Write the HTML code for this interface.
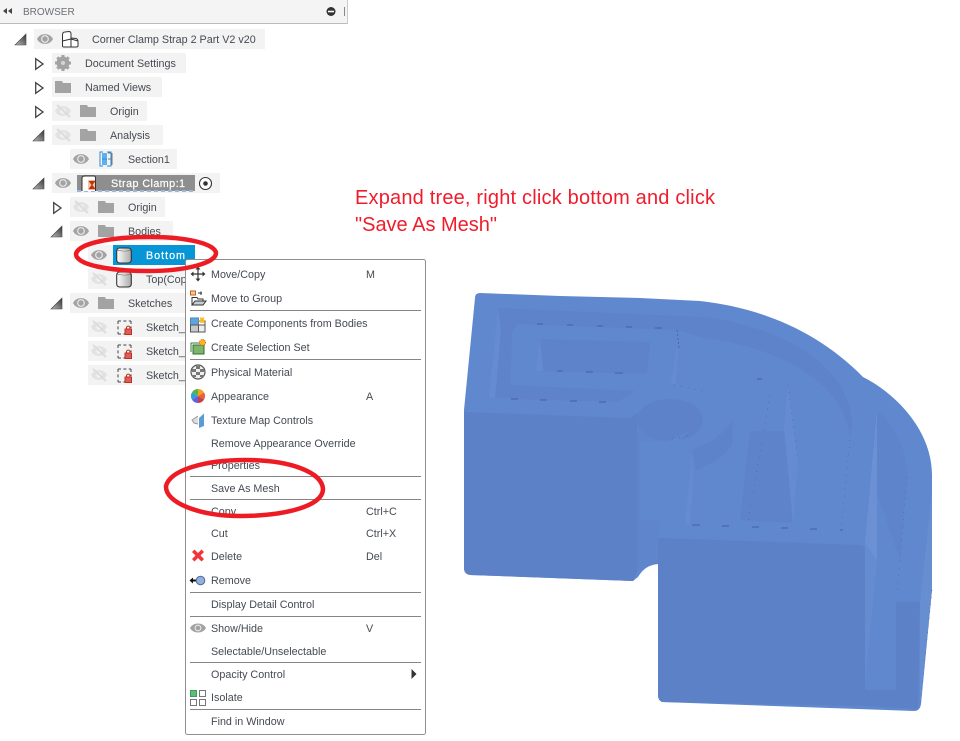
<!DOCTYPE html>
<html><head><meta charset="utf-8"><style>
html,body{margin:0;padding:0;background:#fff;width:960px;height:741px;overflow:hidden}
svg{display:block;position:absolute;left:0;top:0}
text{font-family:"Liberation Sans",sans-serif;font-size:10.75px;fill:#454a52}
.r{font-size:20px;fill:#f01c2c}
.w{fill:#fff;stroke:#fff;stroke-width:.2}
</style></head><body>
<svg width="960" height="741" viewBox="0 0 960 741" xmlns="http://www.w3.org/2000/svg">
<defs>
<linearGradient id="tg" x1="1" y1="0" x2="0" y2="1"><stop offset="0" stop-color="#333"/><stop offset="1" stop-color="#bbb"/></linearGradient>
<linearGradient id="cg" x1="0" y1="0" x2="1" y2="0"><stop offset="0" stop-color="#fff"/><stop offset="1" stop-color="#a9a9a9"/></linearGradient>
<g id="eye"><path d="M-8 0C-5-6.500 5-6.500 8 0C5 6.500-5 6.500-8 0Z" fill="#a3a3a3"/><circle r="3.900" fill="#e8e8e8"/><circle r="2.700" fill="#a3a3a3"/></g>
<g id="eyeoff"><path d="M-8 0C-5-6.500 5-6.500 8 0C5 6.500-5 6.500-8 0Z" fill="#e2e2e2"/><circle r="2.800" fill="#f3f3f3"/><path d="M-6-6L7 6" stroke="#dcdcdc" stroke-width="2"/></g>
<path id="folder" d="M0 0H7L8 2H16V12H0Z" fill="#a3a3a3"/>
<path id="exp" d="M11 0V11H0Z" fill="url(#tg)" stroke="#444" stroke-width=".6"/>
<path id="col" d="M.7.7L8 6L.7 11.3Z" fill="#fff" stroke="#444" stroke-width="1.300"/>
<g id="sk"><path d="M1 1H14M1 1V14M1 14H8M14 1V8" fill="none" stroke="#444" stroke-width="1" stroke-dasharray="3 2.400"/><rect x="8" y="9" width="6.500" height="5.500" fill="#e25a5a" stroke="#b32"/><path d="M9.500 9V7.500a1.800 1.800 0 0 1 3.500 0V9" fill="none" stroke="#b32"/></g>
<g id="cyl"><rect x=".7" y="1" width="14.600" height="15" rx="3" fill="url(#cg)" stroke="#333" stroke-width="1.100"/><path d="M1 3Q8 5 15 3" fill="#fff" stroke="#444" stroke-width=".6"/></g>
</defs>

<!-- 3D model -->
<path d="M475 298Q475 293 480 293L560 296L640 298L700 301C755 307 815 328 863 377C895 393 932 430 932 475V590L921 704Q920 711 914 711L662 702Q658 700 658 695V564Q645 565 638 577L633 581L470 575Q464 574 464 568V410Z" fill="#6088cf"/>
<path d="M464 412L630 418L637 413V572L633 581L470 575Q464 574 464 568Z" fill="#5c81c7"/>
<path d="M637 413V572Q645 565 658 564V535L668 442L650 430Z" fill="#5f85cc"/>
<ellipse cx="670" cy="420" rx="33" ry="21" fill="#5d82c9"/>
<path d="M640 441L668 441L690 431L668 450L660 520L640 520Z" fill="#6088cf"/>
<path d="M658 538L860 545Q865 545 865 550V706L662 702Q658 700 658 695Z" fill="#5c81c7"/>
<path d="M498 308L700 317C760 322 850 355 852 425L850 440C848 395 800 350 700 337L677 330L517 324L512 332L510 398L490 398Z" fill="#5e83ca"/>
<path d="M510 385L635 391L618 402L510 399Z" fill="#5e83ca"/>
<path d="M540 339L650 342L647 374L537 371Z" fill="#5e83ca"/>
<path d="M750 431L788 431L792 523L740 520Z" fill="#5e83ca"/>
<path d="M692 450Q720 440 733 420L732 445Q720 462 696 470Z" fill="#5d83ca"/>
<path d="M498 308L501 330L495 398L489 398Z" fill="#658cd2"/>
<path d="M540 339L543 371L536 371Z" fill="#658cd2"/>
<path d="M677 345L678 350L676 384L671 384Z" fill="#658cd2"/>
<path d="M692 453L693 480L690 525L685 525Z" fill="#658cd2"/>
<path d="M788 385L798 460L793 523L784 427Z" fill="#658cd2"/>
<path d="M877 410C895 425 907 450 907 477L900 560L877 493Z" fill="#5e84cb"/>
<path d="M877 410V560L865 682V543Z" fill="#6b91d4"/>
<path d="M932 493V590L920 707V603Z" fill="#688ed2"/>
<path d="M896 602H920L918 709L865 706V690L896 690Z" fill="#5c81c7"/>
<path d="M865 543L877 560V690H865Z M877 560L896 550V690H877Z" fill="#6188cf" opacity=".6"/>
<g stroke="#46609e" fill="none">
<path stroke-width="1" d="M537 324h6M567 325h6M597 326h6M626 327h6M655 328h7M557 371h6M586 372h7M615 373h8M511 399h7M540 400h7M570 401h7M599 402h7M692 525h8M722 526h7M752 527h7M781 528h7M810 529h7M840 530h3M757 379h5"/>
<path d="M677 330L679 348" stroke-width=".8" stroke-dasharray="2 2"/>
<path d="M770 395L748 522M788 385L798 460M850 440L841 530M674 385L708 392M672 439L690 435M907 477L897 595M932 590L920 705" stroke-dasharray="1 6" stroke-width=".7" opacity=".8"/>
</g>

<!-- Browser header -->
<rect x="0" y="0" width="347" height="23" fill="#f4f4f4"/>
<rect x="0" y="23" width="348" height="1" fill="#bbb"/>
<rect x="347" y="0" width="1" height="24" fill="#ccc"/>
<path d="M3 11L7 8V14ZM8 11L12 8V14Z" fill="#444"/>
<text x="23" y="15" style="fill:#6b6f75;font-size:10px">BROWSER</text>
<circle cx="331" cy="11.500" r="4.500" fill="#333"/><rect x="328" y="10.700" width="6" height="1.600" fill="#fff"/>
<rect x="344" y="7" width="1" height="9" fill="#888"/>

<!-- Row backgrounds -->
<g fill="#f3f3f3">
<rect x="34" y="29" width="231" height="20"/>
<rect x="52" y="53" width="134" height="20"/>
<rect x="52" y="77" width="110" height="20"/>
<rect x="52" y="101" width="95" height="20"/>
<rect x="52" y="125" width="111" height="20"/>
<rect x="70" y="149" width="107" height="20"/>
<rect x="52" y="173" width="168" height="20"/>
<rect x="70" y="197" width="95" height="20"/>
<rect x="70" y="221" width="103" height="20"/>
<rect x="88" y="245" width="107" height="20"/>
<rect x="88" y="269" width="98" height="20"/>
<rect x="70" y="293" width="116" height="20"/>
<rect x="88" y="317" width="98" height="20"/>
<rect x="88" y="341" width="98" height="20"/>
<rect x="88" y="365" width="98" height="20"/>
</g>

<!-- Expand arrows -->
<use href="#exp" x="15" y="34"/>
<use href="#col" x="35" y="58"/>
<use href="#col" x="35" y="82"/>
<use href="#col" x="35" y="106"/>
<use href="#exp" x="33" y="130"/>
<use href="#exp" x="33" y="178"/>
<use href="#col" x="53" y="202"/>
<use href="#exp" x="51" y="226"/>
<use href="#exp" x="51" y="298"/>

<!-- Eyes -->
<use href="#eye" x="45" y="39"/>
<use href="#eyeoff" x="63" y="111"/>
<use href="#eyeoff" x="63" y="135"/>
<use href="#eye" x="81" y="159"/>
<use href="#eye" x="63" y="183"/>
<use href="#eyeoff" x="81" y="207"/>
<use href="#eye" x="81" y="231"/>
<use href="#eye" x="99" y="255"/>
<use href="#eyeoff" x="99" y="279"/>
<use href="#eye" x="81" y="303"/>
<use href="#eyeoff" x="99" y="327"/>
<use href="#eyeoff" x="99" y="351"/>
<use href="#eyeoff" x="99" y="375"/>

<!-- Root icon -->
<path d="M62.500 46V35Q62.500 32 65 32L69 31.500Q71 31.500 71 34V38L76 38.500Q78 39 78 42V46Q78 47 76 47H64Q62.500 47 62.500 46ZM62.500 41L71 39V47M71 38V39L78 41" fill="#fff" stroke="#333" stroke-width="1"/>
<!-- Gear -->
<circle cx="63" cy="63" r="5" fill="#a3a3a3" stroke="#a3a3a3" stroke-width="3"/>
<path d="M63 55V71M55 63H71M57.300 57.300L68.700 68.700M68.700 57.300L57.300 68.700" stroke="#a3a3a3" stroke-width="3"/>
<circle cx="63" cy="63" r="2" fill="#d5d5d5"/>
<!-- Folders -->
<use href="#folder" x="55" y="81"/>
<use href="#folder" x="80" y="105"/>
<use href="#folder" x="80" y="129"/>
<use href="#folder" x="98" y="201"/>
<use href="#folder" x="98" y="225"/>
<use href="#folder" x="98" y="297"/>
<!-- Section icon -->
<rect x="102" y="153" width="5" height="12" fill="#5cb0ee"/>
<path d="M103 152H100V166H103M107 152H111V166H107" fill="none" stroke="#2e8ad8" stroke-width="1"/>
<path d="M108 153H111M108 159H111M112 153V165" fill="none" stroke="#777"/>
<path d="M102 159H107" stroke="#2e8ad8"/>

<!-- Strap clamp -->
<rect x="77" y="175" width="118" height="16" fill="#8e8e8e"/>
<path d="M77 191L195 191" stroke="#9db6dc" stroke-width="2" stroke-dasharray="4 3"/>
<path d="M82 191V178Q82 176 85 176H94Q95.500 176 95.500 178V191" fill="#fff" stroke="#333"/>
<rect x="88" y="181" width="7" height="8" fill="#f4c7a0"/>
<path d="M89 181H95L89 189H95Z" fill="#c0330a" stroke="#c0330a" stroke-width=".7"/>
<circle cx="205.500" cy="183.500" r="6" fill="#fff" stroke="#333" stroke-width="1.100"/><circle cx="205.500" cy="183.500" r="2.300" fill="#333"/>

<!-- Selected body -->
<rect x="113" y="245" width="82" height="20" fill="#0696d7"/>
<use href="#cyl" x="116" y="247"/>
<use href="#cyl" x="116" y="271"/>
<use href="#sk" x="117" y="320"/>
<use href="#sk" x="117" y="344"/>
<use href="#sk" x="117" y="368"/>

<!-- Tree text -->
<text x="92" y="43">Corner Clamp Strap 2 Part V2 v20</text>
<text x="85" y="67">Document Settings</text>
<text x="85" y="91">Named Views</text>
<text x="110" y="115">Origin</text>
<text x="110" y="139">Analysis</text>
<text x="128" y="163">Section1</text>
<text x="111" y="187" class="w" textLength="74">Strap Clamp:1</text>
<text x="128" y="211">Origin</text>
<text x="128" y="235">Bodies</text>
<text x="146" y="259" class="w" textLength="39">Bottom</text>
<text x="146" y="283">Top(Copy</text>
<text x="128" y="307">Sketches</text>
<text x="146" y="331">Sketch_1</text>
<text x="146" y="355">Sketch_2</text>
<text x="146" y="379">Sketch_3</text>

<!-- Context menu -->
<rect x="185.500" y="259.500" width="240" height="475" rx="2" fill="#fff" stroke="#8f8f8f"/>
<g fill="#858585">
<rect x="190" y="310" width="231" height="1"/>
<rect x="190" y="359" width="231" height="1"/>
<rect x="190" y="476" width="231" height="1"/>
<rect x="190" y="499" width="231" height="1"/>
<rect x="190" y="592" width="231" height="1"/>
<rect x="190" y="616" width="231" height="1"/>
<rect x="190" y="662" width="231" height="1"/>
<rect x="190" y="709" width="231" height="1"/>
</g>
<!-- menu icons -->
<path d="M198 268V280M191.500 274H204.500" stroke="#333" stroke-width="1.200"/>
<path d="M198 266.500L195.500 269.500H200.500ZM198 281.500L195.500 278.500H200.500ZM190.500 274L193.500 271.500V276.500ZM205.500 274L202.500 271.500V276.500Z" fill="#333"/>
<rect x="190.500" y="291" width="5" height="4" fill="#f4c7a0" stroke="#c8601a"/>
<path d="M198 293H202M201 291.500V295" stroke="#333" fill="none"/>
<path d="M192 305V297.500H197L198 299H203V301" fill="#fff" stroke="#333"/><path d="M192 305L195 301H206L203 305Z" fill="#c7ccd2" stroke="#333"/>
<rect x="190.500" y="318" width="8" height="7" fill="#5fa4e0" stroke="#4a85c0"/>
<rect x="190.500" y="325" width="8" height="7" fill="#c8c8c8" stroke="#555"/>
<rect x="198.500" y="325" width="6.500" height="7" fill="#eee" stroke="#555"/>
<path d="M198.500 321H205V325" fill="none" stroke="#555"/>
<path d="M201 315.500l1 2.500 2.500-1-1 2.500 2.500 1-2.500 1 .5 2-2-1-2 1 .5-2-2.500-1 2.500-1-1-2.500 2.500 1z" fill="#fbb916"/>
<path d="M191 352V343H201" fill="none" stroke="#2e7d32"/>
<rect x="193" y="345" width="11" height="9" fill="#7fb56a" stroke="#2e6f2e"/>
<circle cx="202.500" cy="342.500" r="3" fill="#fbb916" stroke="#e0421a" stroke-dasharray="1 1"/>
<circle cx="198" cy="372" r="7" fill="#eee" stroke="#555" stroke-width="1.200"/>
<path d="M192 369h4v3h-4zM196 372h4v3h-4zM200 369h4v3h-4zM196 366h4v3h-4zM192 375h4v2h-4zM200 375h4v2h-4z" fill="#777"/>
<path d="M198 396V389A7 7 0 0 1 204.100 392.500Z" fill="#f2a21e"/>
<path d="M198 396L204.100 392.500A7 7 0 0 1 204.100 399.500Z" fill="#e8613a"/>
<path d="M198 396L204.100 399.500A7 7 0 0 1 198 403Z" fill="#c2404a"/>
<path d="M198 396V403A7 7 0 0 1 191.900 399.500Z" fill="#6a5ce0"/>
<path d="M198 396L191.900 399.500A7 7 0 0 1 191.900 392.500Z" fill="#2f9fd8"/>
<path d="M198 396L191.900 392.500A7 7 0 0 1 198 389Z" fill="#58b04a"/>
<path d="M199 418L204 413.500V426L199 428Z" fill="#5d9bd5"/>
<path d="M198 416L192 420L194 423L198 424" fill="#ddd" stroke="#999"/>
<path d="M192.500 551L196 554.500L192.500 558L195 560.500L198.500 557L202 560.500L204.500 558L201 554.500L204.500 551L202 548.500L198.500 552L195 548.500Z" fill="#f0353a" transform="translate(-.5 1)"/>
<path d="M189.500 580.500L193 577.500V579.500H197V581.500H193V583.500Z" fill="#111"/>
<circle cx="200.500" cy="580.500" r="4.300" fill="#8fb0e0" stroke="#56688a"/>
<path d="M190 628C193 622 203 622 206 628C203 634 193 634 190 628Z" fill="#a3a3a3"/><circle cx="198" cy="628" r="3.400" fill="#e8e8e8"/><circle cx="198" cy="628" r="2.300" fill="#a3a3a3"/>
<path d="M411.500 669V679L416.500 674Z" fill="#333"/>
<rect x="190.500" y="690.500" width="6" height="6" fill="#5cbd7a" stroke="#3d9e5c"/>
<rect x="199.500" y="690.500" width="6" height="6" fill="#fff" stroke="#777"/>
<rect x="190.500" y="699.500" width="6" height="6" fill="#fff" stroke="#777"/>
<rect x="199.500" y="699.500" width="6" height="6" fill="#fff" stroke="#777"/>

<!-- menu text -->
<text x="211" y="278">Move/Copy</text><text x="366" y="278">M</text>
<text x="211" y="302">Move to Group</text>
<text x="211" y="327">Create Components from Bodies</text>
<text x="211" y="351">Create Selection Set</text>
<text x="211" y="376">Physical Material</text>
<text x="211" y="400">Appearance</text><text x="366" y="400">A</text>
<text x="211" y="424">Texture Map Controls</text>
<text x="211" y="447">Remove Appearance Override</text>
<text x="211" y="469">Properties</text>
<text x="211" y="492">Save As Mesh</text>
<text x="211" y="515">Copy</text><text x="366" y="515">Ctrl+C</text>
<text x="211" y="537">Cut</text><text x="366" y="537">Ctrl+X</text>
<text x="211" y="560">Delete</text><text x="366" y="560">Del</text>
<text x="211" y="584">Remove</text>
<text x="211" y="608">Display Detail Control</text>
<text x="211" y="632">Show/Hide</text><text x="366" y="632">V</text>
<text x="211" y="655">Selectable/Unselectable</text>
<text x="211" y="678">Opacity Control</text>
<text x="211" y="701">Isolate</text>
<text x="211" y="725">Find in Window</text>

<!-- Red annotations -->
<path d="M76 254C78 243 112 237 150 237C188 237 215 244 216 253C216 263 186 271 148 271C110 271 76 265 76 254Z" fill="none" stroke="#ed1c24" stroke-width="4.500"/>
<path d="M166 486C170 470 205 460 245 460C290 460 322 472 323 489C323 506 285 516 240 516C200 516 165 503 166 486Z" fill="none" stroke="#ed1c24" stroke-width="4.500"/>
<text class="r" x="355" y="204" textLength="360">Expand tree, right click bottom and click</text>
<text class="r" x="355" y="231" textLength="142">"Save As Mesh"</text>
</svg>
</body></html>
